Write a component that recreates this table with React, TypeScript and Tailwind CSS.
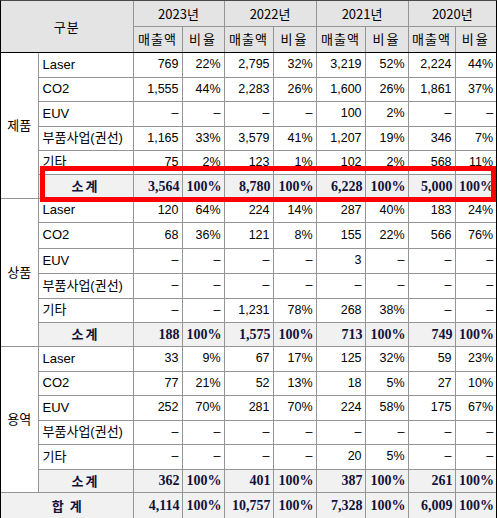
import React from "react";

type Row = { label: string; vals: string[]; h: string };
type Section = { name: string; rows: Row[]; sub: string[]; subH: string };

const D = "–";

const sections: Section[] = [
  {
    name: "제품",
    rows: [
      { label: "Laser", vals: ["769", "22%", "2,795", "32%", "3,219", "52%", "2,224", "44%"], h: "h-[25px]" },
      { label: "CO2", vals: ["1,555", "44%", "2,283", "26%", "1,600", "26%", "1,861", "37%"], h: "h-[24px]" },
      { label: "EUV", vals: [D, D, D, D, "100", "2%", D, D], h: "h-[25px]" },
      { label: "부품사업(권선)", vals: ["1,165", "33%", "3,579", "41%", "1,207", "19%", "346", "7%"], h: "h-[24px]" },
      { label: "기타", vals: ["75", "2%", "123", "1%", "102", "2%", "568", "11%"], h: "h-[24px]" },
    ],
    sub: ["3,564", "100%", "8,780", "100%", "6,228", "100%", "5,000", "100%"],
    subH: "h-[24px]",
  },
  {
    name: "상품",
    rows: [
      { label: "Laser", vals: ["120", "64%", "224", "14%", "287", "40%", "183", "24%"], h: "h-[24px]" },
      { label: "CO2", vals: ["68", "36%", "121", "8%", "155", "22%", "566", "76%"], h: "h-[26px]" },
      { label: "EUV", vals: [D, D, D, D, "3", D, D, D], h: "h-[25px]" },
      { label: "부품사업(권선)", vals: [D, D, D, D, D, D, D, D], h: "h-[25px]" },
      { label: "기타", vals: [D, D, "1,231", "78%", "268", "38%", D, D], h: "h-[24px]" },
    ],
    sub: ["188", "100%", "1,575", "100%", "713", "100%", "749", "100%"],
    subH: "h-[24px]",
  },
  {
    name: "용역",
    rows: [
      { label: "Laser", vals: ["33", "9%", "67", "17%", "125", "32%", "59", "23%"], h: "h-[25px]" },
      { label: "CO2", vals: ["77", "21%", "52", "13%", "18", "5%", "27", "10%"], h: "h-[24px]" },
      { label: "EUV", vals: ["252", "70%", "281", "70%", "224", "58%", "175", "67%"], h: "h-[25px]" },
      { label: "부품사업(권선)", vals: [D, D, D, D, D, D, D, D], h: "h-[24px]" },
      { label: "기타", vals: [D, D, D, D, "20", "5%", D, D], h: "h-[25px]" },
    ],
    sub: ["362", "100%", "401", "100%", "387", "100%", "261", "100%"],
    subH: "h-[23px]",
  },
];

const total = ["4,114", "100%", "10,757", "100%", "7,328", "100%", "6,009", "100%"];
const years = ["2023년", "2022년", "2021년", "2020년"];

const cell = "border border-[#959595] p-0";
const num = `${cell} text-right pr-[3px] font-['Liberation_Sans','Noto_Sans_CJK_KR',sans-serif] text-[12.5px] text-black`;
const bold = `${cell} text-right pr-[2px] font-['Liberation_Serif','Noto_Sans_CJK_KR',serif] font-bold text-[14px] text-[#12123a]`;
const head = `${cell} text-center font-['Noto_Sans_CJK_KR','Liberation_Sans',sans-serif] text-[13px] text-black`;

export default function App() {
  return (
    <div className="relative w-[497px] h-[518px] bg-white">
      <div className="w-[497px] border border-black border-t-[#4a4a4a] border-l-black">
        <table className="w-[495px] table-fixed border-collapse border-hidden">
          <colgroup>
            <col className="w-[37px]" />
            <col className="w-[95px]" />
            <col className="w-[49px]" />
            <col className="w-[42px]" />
            <col className="w-[49px]" />
            <col className="w-[43px]" />
            <col className="w-[49px]" />
            <col className="w-[43px]" />
            <col className="w-[47px]" />
            <col className="w-[41px]" />
          </colgroup>
          <thead>
            <tr className="h-[25px] bg-[#e4e4e4]">
              <th colSpan={2} rowSpan={2} className={`${head} font-normal border-b-black tracking-[1px]`}>
                구분
              </th>
              {years.map((y) => (
                <th key={y} colSpan={2} className={`${head} font-normal font-['Liberation_Sans','Noto_Sans_CJK_KR',sans-serif] text-[12.5px]`}>
                  {y}
                </th>
              ))}
            </tr>
            <tr className="h-[26px] bg-[#e4e4e4]">
              {years.map((y) => (
                <React.Fragment key={y}>
                  <th className={`${head} font-normal border-b-black tracking-[1px]`}>매출액</th>
                  <th className={`${head} font-normal border-b-black tracking-[2px]`}>비율</th>
                </React.Fragment>
              ))}
            </tr>
          </thead>
          <tbody>
            {sections.map((s) => (
              <React.Fragment key={s.name}>
                {s.rows.map((r, i) => (
                  <tr key={r.label} className={r.h}>
                    {i === 0 && (
                      <td rowSpan={6} className={`${head} align-middle`}>
                        {s.name}
                      </td>
                    )}
                    <td className={`${cell} pl-[4px] text-left font-['Liberation_Sans','Noto_Sans_CJK_KR',sans-serif] text-[13px] text-black whitespace-nowrap`}>
                      {r.label}
                    </td>
                    {r.vals.map((v, j) => (
                      <td key={j} className={num}>
                        {v}
                      </td>
                    ))}
                  </tr>
                ))}
                <tr className={`${s.subH} bg-[#f1f1f1]`}>
                  <td className={`${cell} text-center font-['Noto_Sans_CJK_KR',sans-serif] font-bold text-[13px] text-[#12123a] tracking-[2px]`}>
                    소계
                  </td>
                  {s.sub.map((v, j) => (
                    <td key={j} className={bold}>
                      {v}
                    </td>
                  ))}
                </tr>
              </React.Fragment>
            ))}
            <tr className="h-[26px] bg-[#f1f1f1]">
              <td colSpan={2} className={`${cell} text-center font-['Noto_Sans_CJK_KR',sans-serif] font-bold text-[13px] text-[#12123a]`}>
                합&nbsp;&nbsp;계
              </td>
              {total.map((v, j) => (
                <td key={j} className={bold}>
                  {v}
                </td>
              ))}
            </tr>
          </tbody>
        </table>
      </div>
      <div className="absolute left-[40px] top-[166px] w-[456px] h-[36px] border-[5px] border-[#ff0000]" />
    </div>
  );
}
